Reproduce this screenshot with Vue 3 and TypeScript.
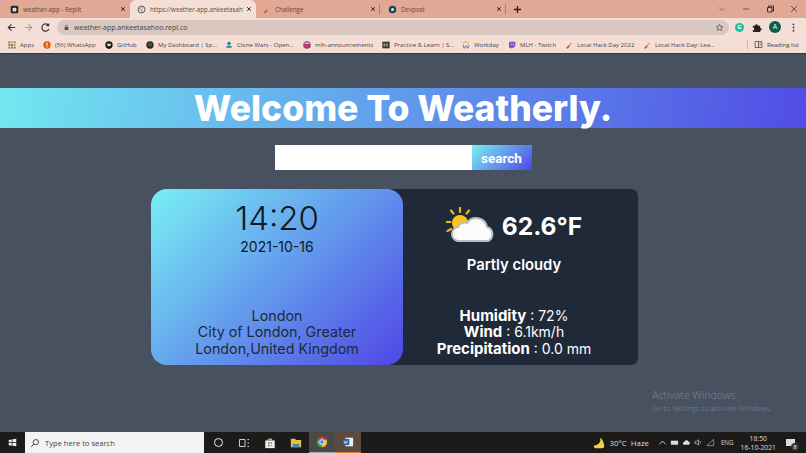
<template>
  <div class="screen">
    <header class="browser">
      <div class="tabstrip">
        <div
          v-for="tab in tabs"
          :key="tab.title"
          class="tab"
          :class="{ active: tab.active, divided: tab.divided }"
          :style="{ width: tab.width + 'px', paddingLeft: tab.inset + 'px' }"
        >
          <svg class="tab-icon" viewBox="0 0 12 12">
            <template v-if="tab.icon === 'replit'">
              <rect x="1" y="1" width="10" height="10" rx="2" fill="#222" />
              <rect x="3.500" y="3.500" width="5" height="5" rx="1" fill="#ddd" />
            </template>
            <template v-else-if="tab.icon === 'globe'">
              <circle cx="6" cy="6" r="4.600" fill="none" stroke="#555" stroke-width="1.300" />
              <path d="M2 4.500c2 1 3 1 4 2s0 2 1 3M7 2c-1 1-1 2 1 2.500" fill="none" stroke="#555" stroke-width="1" />
            </template>
            <template v-else-if="tab.icon === 'hack'">
              <path d="M2 10l4-4 2 2-4 3z" fill="#d9534f" />
              <path d="M6 6l3-3 1 2-3 3z" fill="#e8b23a" />
            </template>
            <template v-else>
              <circle cx="6" cy="6" r="5" fill="#17465f" />
              <circle cx="6" cy="6" r="2" fill="#f0e0da" />
            </template>
          </svg>
          <span class="tab-title">{{ tab.title }}</span>
          <svg class="tab-close" viewBox="0 0 8 8"><path d="M1.500 1.500l5 5M6.500 1.500l-5 5" stroke="#333" stroke-width="1.300" /></svg>
        </div>
        <svg class="new-tab" viewBox="0 0 10 10"><path d="M5 1v8M1 5h8" stroke="#222" stroke-width="1.500" /></svg>
        <div class="window-btns">
          <svg viewBox="0 0 10 10"><path d="M2 3.500l3 3 3-3" fill="none" stroke="#8a6a60" /></svg>
          <svg viewBox="0 0 10 10"><path d="M2 5h6" stroke="#6a5048" /></svg>
          <svg viewBox="0 0 10 10"><path d="M2.500 3.500h4.500v4.500h-4.500zM3.500 3.500v-1.500h5v5h-1.500" fill="none" stroke="#333" /></svg>
          <svg viewBox="0 0 10 10"><path d="M2 2l6 6M8 2l-6 6" stroke="#6a5048" /></svg>
        </div>
      </div>

      <div class="toolbar">
        <svg class="nav" viewBox="0 0 12 12"><path d="M10 6H2.500M6 2.500L2.500 6 6 9.500" fill="none" stroke="#333" stroke-width="1.200" /></svg>
        <svg class="nav" viewBox="0 0 12 12"><path d="M2 6h7.500M6 2.500L9.500 6 6 9.500" fill="none" stroke="#aa9a94" stroke-width="1.200" /></svg>
        <svg class="nav" viewBox="0 0 12 12"><path d="M9.800 7.500A4 4 0 1 1 9 3.300" fill="none" stroke="#333" stroke-width="1.300" /><path d="M10 1v3.500H6.500z" fill="#333" /></svg>
        <div class="omnibox">
          <svg class="lock" viewBox="0 0 8 10"><rect x="1" y="4" width="6" height="5" fill="#555" /><path d="M2.500 4V2.800a1.500 1.500 0 0 1 3 0V4" fill="none" stroke="#555" /></svg>
          <span class="url">weather-app.ankeetasahoo.repl.co</span>
          <svg class="star" viewBox="0 0 12 12"><path d="M6 1.500l1.300 3 3.200.3-2.400 2.100.7 3.200L6 8.400l-2.800 1.700.7-3.200L1.500 4.800l3.200-.3z" fill="none" stroke="#555" /></svg>
        </div>
        <div class="extensions">
          <span class="grammarly">G</span>
          <svg viewBox="0 0 12 12"><path d="M2 4h2.500a1.500 1.500 0 0 1 3 0H10v2.500a1.500 1.500 0 0 1 0 3V11H2V9a1.500 1.500 0 0 0 0-3z" fill="#222" /></svg>
          <span class="avatar">A</span>
          <svg viewBox="0 0 12 12"><g fill="#333"><circle cx="6" cy="2.500" r="1" /><circle cx="6" cy="6" r="1" /><circle cx="6" cy="9.500" r="1" /></g></svg>
        </div>
      </div>

      <div class="bookmarks">
        <div v-for="mark in bookmarks" :key="mark.label" class="bookmark" :style="{ width: mark.width + 'px' }">
          <svg class="mark-icon" viewBox="0 0 12 12">
            <g v-if="mark.icon === 'apps'">
              <rect x="0.500" y="0.500" width="3" height="3" fill="#d9534f" />
              <rect x="4.500" y="0.500" width="3" height="3" fill="#e8a33a" />
              <rect x="8.500" y="0.500" width="3" height="3" fill="#4a8df0" />
              <rect x="0.500" y="4.500" width="3" height="3" fill="#3aa655" />
              <rect x="4.500" y="4.500" width="3" height="3" fill="#d9534f" />
              <rect x="8.500" y="4.500" width="3" height="3" fill="#e8a33a" />
              <rect x="0.500" y="8.500" width="3" height="3" fill="#4a8df0" />
              <rect x="4.500" y="8.500" width="3" height="3" fill="#3aa655" />
              <rect x="8.500" y="8.500" width="3" height="3" fill="#d9534f" />
            </g>
            <g v-else-if="mark.icon === 'notify'">
              <circle cx="6" cy="6" r="5.500" fill="#e8590c" />
              <rect x="5.200" y="2.500" width="1.600" height="4.500" fill="#fff" />
              <rect x="5.200" y="8" width="1.600" height="1.600" fill="#fff" />
            </g>
            <g v-else-if="mark.icon === 'github'">
              <circle cx="6" cy="6" r="5.500" fill="#1b1b1b" />
              <path d="M3.500 3.500l1.300.6h2.400l1.300-.6v3l-1 1.500H4.500l-1-1.500z" fill="#f5ded6" />
              <path d="M4.500 8h3v3.500h-3z" fill="#1b1b1b" />
            </g>
            <g v-else-if="mark.icon === 'disc'">
              <circle cx="6" cy="6" r="5.500" fill="#2b2b2b" />
              <path d="M3 4.500c2-.6 4-.5 6 .4M3.300 6.500c2-.5 3.700-.4 5.400.4" fill="none" stroke="#999" stroke-width=".8" />
            </g>
            <g v-else-if="mark.icon === 'clone'">
              <circle cx="6" cy="3.500" r="2.500" fill="#2f6f8f" />
              <path d="M1 9c2-3 8-3 10 0-2 2-8 2-10 0z" fill="#3c8fb0" />
            </g>
            <g v-else-if="mark.icon === 'mlh'">
              <circle cx="6" cy="6" r="5.500" fill="#8a3a8f" />
              <rect x="1" y="6" width="10" height="4" fill="#d9344f" />
              <rect x="2.500" y="2.500" width="7" height="2" fill="#e8c8e0" />
            </g>
            <g v-else-if="mark.icon === 'cc'">
              <rect x="0.500" y="1" width="11" height="10" fill="#3a3a3a" />
              <path d="M5 4.500H3v3h2M9 4.500H7v3h2" fill="none" stroke="#eee" stroke-width=".9" />
            </g>
            <g v-else-if="mark.icon === 'workday'">
              <path d="M2 5a4 4 0 0 1 8 0" fill="none" stroke="#e8a33a" stroke-width="1.300" />
              <path d="M1.500 6l1.800 5 2.700-4 2.700 4 1.800-5" fill="none" stroke="#2f6fb4" stroke-width="1.300" />
            </g>
            <g v-else-if="mark.icon === 'twitch'">
              <path d="M2.500 1H11v6.500L8.500 10H6.500L4.500 11.500V10H1.500V3z" fill="#7d4fd0" />
              <path d="M5.500 3.500v3M8 3.500v3" stroke="#f5ded6" />
            </g>
            <g v-else>
              <path d="M1.500 10.500l4-4.500 2 2-3.500 3.500z" fill="#c9574f" />
              <path d="M6 5.500l3.500-4 1 2.500-3 3z" fill="#e8b23a" />
            </g>
          </svg>
          <span>{{ mark.label }}</span>
        </div>
        <div class="reading">
          <svg viewBox="0 0 12 12"><path d="M1.500 2h9v8h-9zM6 2v8M7.500 4.500h1.500M7.500 6.500h1.500" fill="none" stroke="#444" /></svg>
          <span>Reading list</span>
        </div>
      </div>
    </header>

    <main class="page">
      <h1 class="banner">Welcome To Weatherly.</h1>
      <form class="search" @submit.prevent>
        <input v-model="city" type="text" class="search-input" />
        <button type="submit" class="search-btn">search</button>
      </form>

      <section class="card">
        <div class="card-left">
          <div>
            <div class="clock">14:20</div>
            <div class="date">2021-10-16</div>
          </div>
          <div class="place">London<br />City of London, Greater<br />London,United Kingdom</div>
        </div>
        <div class="card-right">
          <div>
            <div class="temp-row">
              <svg class="weather-icon" viewBox="0 0 49 36">
                <g stroke="#f0b429" stroke-width="2.200" stroke-linecap="round">
                  <path d="M14 1v4M5 3.500l2.500 3M23 3.500l-2.500 3M0.500 15h4M1.500 24l3.500-2" />
                </g>
                <circle cx="14" cy="16" r="8" fill="#fcc419" />
                <path d="M14 34a7 7 0 0 1-2-14 7 7 0 0 1 9-4 11 11 0 0 1 20 4 7.500 7.500 0 0 1 1 14z" fill="#fafbfc" stroke="#b9bec4" stroke-width="2" />
              </svg>
              <span class="temp">62.6°F</span>
            </div>
            <div class="condition">Partly cloudy</div>
          </div>
          <div class="stats">
            <div><b>Humidity</b> : 72%</div>
            <div><b>Wind</b> : 6.1km/h</div>
            <div><b>Precipitation</b> : 0.0 mm</div>
          </div>
        </div>
      </section>

      <div class="activate">
        <div class="activate-title">Activate Windows</div>
        <div>Go to Settings to activate Windows.</div>
      </div>
    </main>

    <footer class="taskbar">
      <svg class="win-logo" viewBox="0 0 12 12"><path d="M1 2.500l4-.6v3.800H1zM6 1.800l5-.8v4.700H6zM1 6.500h4v3.700l-4-.6zM6 6.500h5v4.600l-5-.8z" fill="#eee" /></svg>
      <div class="task-search">
        <svg viewBox="0 0 12 12"><circle cx="7" cy="5" r="3.200" fill="none" stroke="#333" /><path d="M4.700 7.300L1.500 10.500" stroke="#333" stroke-width="1.200" /></svg>
        <span>Type here to search</span>
      </div>
      <div class="task-apps">
        <div class="task-app"><span class="cortana"></span></div>
        <div class="task-app">
          <svg viewBox="0 0 12 12"><path d="M1.500 2.500h5.500v7h-5.500zM9.500 2.500h1.500M9.500 6h1.500M9.500 9.500h1.500" fill="none" stroke="#ccc" /></svg>
        </div>
        <div class="task-app">
          <svg viewBox="0 0 14 14"><path d="M1.500 4h11v9h-11z" fill="#f2f2f2" /><path d="M5 4V2.500h4V4" fill="none" stroke="#f2f2f2" /><rect x="4.500" y="6" width="2" height="2" fill="#e04e2a" /><rect x="7.500" y="6" width="2" height="2" fill="#6ab42d" /><rect x="4.500" y="9" width="2" height="2" fill="#1e90d8" /><rect x="7.500" y="9" width="2" height="2" fill="#f5b50c" /></svg>
        </div>
        <div class="task-app">
          <svg viewBox="0 0 14 14"><path d="M1 2h5l1 1.500h6V12H1z" fill="#f0c040" /><rect x="3" y="8" width="8" height="4" fill="#3b8bc4" /></svg>
        </div>
        <div class="task-app lit">
          <svg viewBox="0 0 14 14"><circle cx="7" cy="7" r="6" fill="#d6453a" /><path d="M7 7L12.200 4A6 6 0 0 1 7 13z" fill="#f2c230" /><path d="M7 7L7 13A6 6 0 0 1 1.800 4z" fill="#3aa655" /><circle cx="7" cy="7" r="2.800" fill="#4a8df0" stroke="#fff" /></svg>
        </div>
        <div class="task-app lit open">
          <svg viewBox="0 0 14 14"><rect x="4" y="2" width="9" height="10" fill="#e8eef6" /><rect x="1" y="3.500" width="7.500" height="7" fill="#2b5c9e" /><path d="M2.300 5.200l1 3.600 1-2.600 1 2.600 1-3.600" fill="none" stroke="#fff" stroke-width=".7" /></svg>
        </div>
      </div>
      <div class="tray">
        <svg class="moon" viewBox="0 0 14 14"><path d="M8 1c1.500 3 .5 7-4.500 8.500L1 9.800c-.5 1.500.5 3.200 2 3.200h8c2 0 2.500-1.500 2-3C12.500 6 11 2 8 1z" fill="#f3cf4e" /></svg>
        <span class="tray-weather">30°C&nbsp; Haze</span>
        <svg class="tray-icon first" viewBox="0 0 10 10"><path d="M1.500 7L5 3.500 8.500 7" fill="none" stroke="#ddd" /></svg>
        <svg class="tray-icon" viewBox="0 0 10 10"><rect x="1" y="3" width="8" height="4.500" fill="#ddd" /></svg>
        <svg class="tray-icon" viewBox="0 0 10 10"><path d="M2.500 7.500a1.500 1.500 0 0 1 0-3 2.500 2.500 0 0 1 4.700-.5 1.800 1.800 0 0 1 .3 3.500z" fill="#ddd" /></svg>
        <svg class="tray-icon" viewBox="0 0 10 10"><path d="M1 4h1.500L5 2v6L2.500 6H1zM6.500 3.500a2 2 0 0 1 0 3" fill="none" stroke="#ccc" stroke-width=".8" /></svg>
        <svg class="tray-icon" viewBox="0 0 10 10"><path d="M1 8.500L8.500 1.500v7z" fill="none" stroke="#aaa" stroke-width=".8" /></svg>
        <span class="lang">ENG</span>
        <div class="clock-tray"><div>18:50</div><div>16-10-2021</div></div>
        <div class="notify"><span class="notify-count">8</span></div>
      </div>
    </footer>
  </div>
</template>

<script setup lang="ts">
import { ref } from 'vue';

interface Tab {
  title: string;
  icon: string;
  width: number;
  inset: number;
  active?: boolean;
  divided?: boolean;
}

interface Bookmark {
  label: string;
  width: number;
  icon: string;
}

const city = ref('');

const tabs: Tab[] = [
  { title: 'weather-app - Replit', icon: 'replit', width: 130, inset: 10 },
  { title: 'https://weather-app.ankeetasah', icon: 'globe', width: 126, inset: 7, active: true },
  { title: 'Challenge', icon: 'hack', width: 124, inset: 6, divided: true },
  { title: 'Devpost', icon: 'devpost', width: 126, inset: 8, divided: true }
];

const bookmarks: Bookmark[] = [
  { label: 'Apps', width: 35, icon: 'apps' },
  { label: '(56) WhatsApp', width: 62, icon: 'notify' },
  { label: 'GitHub', width: 41, icon: 'github' },
  { label: 'My Dashboard | Sp...', width: 79, icon: 'disc' },
  { label: 'Clone Wars - Open...', width: 78, icon: 'clone' },
  { label: 'mlh-announcements', width: 79, icon: 'mlh' },
  { label: 'Practice & Learn | S...', width: 80, icon: 'cc' },
  { label: 'Workday', width: 46, icon: 'workday' },
  { label: 'MLH - Twitch', width: 57, icon: 'twitch' },
  { label: 'Local Hack Day 2022', width: 78, icon: 'hack' },
  { label: 'Local Hack Day: Lea...', width: 80, icon: 'hack' }
];
</script>

<style scoped>
.screen {
  width: 806px;
  height: 453px;
  display: flex;
  flex-direction: column;
  overflow: hidden;
  font-family: "Open Sans", "Liberation Sans", sans-serif;
  background-color: #475160;
}

.browser {
  flex: none;
  height: 54px;
  background-color: #f5ded6;
  border-bottom: 1px solid #33373c;
  box-sizing: border-box;
  color: #444;
  font-size: 6.200px;
}

.tabstrip {
  height: 18px;
  display: flex;
  align-items: center;
  background-color: #e2a896;
}

.tab {
  position: relative;
  height: 18px;
  flex: none;
  display: flex;
  align-items: center;
  padding-right: 4px;
  box-sizing: border-box;
  color: #5a4a44;
}

.tab.active {
  background-color: #f5ded6;
  border-radius: 6px 6px 0 0;
}

.tab.divided::after {
  content: "";
  position: absolute;
  top: 4px;
  right: 0;
  width: 1px;
  height: 10px;
  background-color: #a87f72;
}

.tab-icon {
  width: 9px;
  height: 9px;
  flex: none;
  margin-right: 4px;
}

.tab-title {
  flex: 1;
  min-width: 0;
  white-space: nowrap;
}

.tab-close {
  width: 6px;
  height: 6px;
  flex: none;
  margin-left: 3px;
}

.new-tab {
  width: 9px;
  height: 9px;
  margin-left: 7px;
}

.window-btns {
  margin-left: auto;
  display: flex;
  align-items: center;
  gap: 14px;
  padding-right: 7px;
}

.window-btns svg {
  width: 10px;
  height: 10px;
}

.toolbar {
  height: 18px;
  display: flex;
  align-items: center;
  padding: 0 7px 0 6px;
}

.nav {
  width: 11px;
  height: 11px;
  flex: none;
  margin-right: 6px;
}

.omnibox {
  flex: none;
  width: 672px;
  height: 15px;
  display: flex;
  align-items: center;
  padding: 0 5px 0 7px;
  box-sizing: border-box;
  border-radius: 8px;
  background-color: #d9c8c0;
}

.lock {
  width: 5px;
  height: 7px;
  margin-right: 5px;
}

.url {
  font-size: 7px;
  color: #444;
}

.star {
  width: 9px;
  height: 9px;
  margin-left: auto;
}

.extensions {
  flex: 1;
  display: flex;
  align-items: center;
  justify-content: space-between;
  padding-left: 6px;
}

.extensions svg {
  width: 11px;
  height: 11px;
}

.grammarly {
  width: 9px;
  height: 9px;
  border-radius: 50%;
  background-color: #17c29a;
  color: #fff;
  font-size: 6px;
  font-weight: 700;
  line-height: 9px;
  text-align: center;
}

.avatar {
  width: 12px;
  height: 12px;
  border-radius: 50%;
  background-color: #0f5c4c;
  color: #fff;
  font-size: 7px;
  line-height: 12px;
  text-align: center;
}

.bookmarks {
  height: 17px;
  display: flex;
  align-items: center;
  padding-left: 8px;
  white-space: nowrap;
  font-size: 6px;
}

.bookmark {
  flex: none;
  display: flex;
  align-items: center;
  gap: 4px;
  overflow: hidden;
}

.mark-icon {
  width: 8px;
  height: 8px;
  flex: none;
}

.reading {
  margin-left: auto;
  display: flex;
  align-items: center;
  gap: 4px;
  height: 9px;
  padding: 0 7px 0 6px;
  border-left: 1px solid #cbb8b0;
}

.reading svg {
  width: 9px;
  height: 9px;
}

.page {
  position: relative;
  flex: 1;
  min-height: 0;
  padding-top: 34px;
  display: flex;
  flex-direction: column;
  align-items: center;
}

.banner {
  width: 100%;
  height: 40px;
  margin: 0;
  background: linear-gradient(100deg, #72e8f0, #4f46e5 104%);
  color: #fff;
  font-family: "Inter", sans-serif;
  font-size: 35.500px;
  font-weight: 800;
  line-height: 42px;
  text-align: center;
}

.search {
  display: flex;
  margin-top: 17px;
}

.search-input {
  width: 197px;
  height: 25px;
  padding: 0;
  border: none;
  box-sizing: border-box;
  background-color: #fff;
  outline: none;
}

.search-btn {
  width: 60px;
  height: 25px;
  padding: 0;
  border: none;
  background: linear-gradient(135deg, #78f0f4, #4f46e5);
  color: #fff;
  font-family: "Roboto", sans-serif;
  font-size: 13.500px;
  font-weight: 700;
}

.card {
  display: flex;
  width: 487px;
  height: 176px;
  margin-top: 19px;
  margin-right: 17px;
  color: #fff;
  font-family: "Inter", sans-serif;
  text-align: center;
}

.card-left {
  position: relative;
  width: 252px;
  flex: none;
  display: flex;
  flex-direction: column;
  justify-content: space-between;
  padding: 12px 0 8px;
  box-sizing: border-box;
  border-radius: 16px;
  background: linear-gradient(135deg, #78f0f4, #4f46e5);
  color: #111827;
}

.clock {
  font-size: 33px;
  font-weight: 300;
  line-height: 34px;
}

.date {
  margin-top: 3px;
  font-size: 14px;
  line-height: 18px;
}

.place {
  font-size: 14.300px;
  line-height: 16.500px;
  color: #1f2937;
}

.card-right {
  flex: 1;
  margin-left: -13px;
  display: flex;
  flex-direction: column;
  justify-content: space-between;
  padding: 16px 0 8px;
  box-sizing: border-box;
  border-radius: 0 7px 7px 0;
  background-color: #1f2937;
}

.temp-row {
  display: flex;
  align-items: center;
  justify-content: center;
  gap: 7px;
  height: 40px;
}

.weather-icon {
  width: 49px;
  height: 36px;
}

.temp {
  padding-top: 2px;
  font-size: 24.500px;
  font-weight: 700;
}

.condition {
  margin-top: 11px;
  font-size: 14.800px;
  font-weight: 600;
  line-height: 18px;
}

.stats {
  font-size: 14px;
  line-height: 16.500px;
}

.stats b {
  font-size: 15px;
  font-weight: 700;
  line-height: 16px;
}

.activate {
  position: absolute;
  top: 334px;
  left: 652px;
  color: #6d7682;
  font-size: 7.300px;
  line-height: 12px;
  white-space: nowrap;
}

.activate-title {
  font-size: 10.200px;
  line-height: 14px;
}

.taskbar {
  flex: none;
  height: 21px;
  display: flex;
  align-items: center;
  background-color: #1d1b19;
  color: #ddd;
  font-size: 7.500px;
}

.win-logo {
  width: 9px;
  height: 9px;
  margin: 0 8px;
}

.task-search {
  width: 179px;
  height: 21px;
  flex: none;
  display: flex;
  align-items: center;
  gap: 5px;
  padding-left: 5px;
  box-sizing: border-box;
  background-color: #f3f3f3;
  color: #444;
  font-size: 7.600px;
}

.task-search svg {
  width: 10px;
  height: 10px;
}

.task-apps {
  display: flex;
  margin-left: 1px;
}

.task-app {
  width: 26px;
  height: 21px;
  display: flex;
  align-items: center;
  justify-content: center;
  box-sizing: border-box;
}

.task-app svg {
  width: 12px;
  height: 12px;
}

.task-app.lit {
  background-color: #4a4846;
  border-bottom: 1px solid #9ab;
}

.task-app.open {
  background-color: #5a4a40;
  border-bottom-color: #e07a30;
}

.cortana {
  width: 7px;
  height: 7px;
  border: 1.500px solid #eee;
  border-radius: 50%;
}

.tray {
  margin-left: auto;
  display: flex;
  align-items: center;
  padding-right: 11px;
}

.moon {
  width: 12px;
  height: 12px;
  margin-right: 5px;
}

.tray-weather {
  margin-right: 6px;
  font-size: 7.800px;
}

.tray-icon {
  width: 9px;
  height: 9px;
  margin-left: 3px;
}

.lang {
  margin-left: 6px;
  font-size: 6.200px;
}

.clock-tray {
  margin-left: 7px;
  font-size: 6.800px;
  line-height: 9px;
  text-align: center;
}

.notify {
  position: relative;
  width: 9px;
  height: 7px;
  margin-left: 10px;
  background-color: #ddd;
}

.notify-count {
  position: absolute;
  right: -4px;
  bottom: -5px;
  width: 8px;
  height: 8px;
  border-radius: 50%;
  background-color: #333;
  color: #fff;
  font-size: 6px;
  line-height: 8px;
  text-align: center;
}
</style>
